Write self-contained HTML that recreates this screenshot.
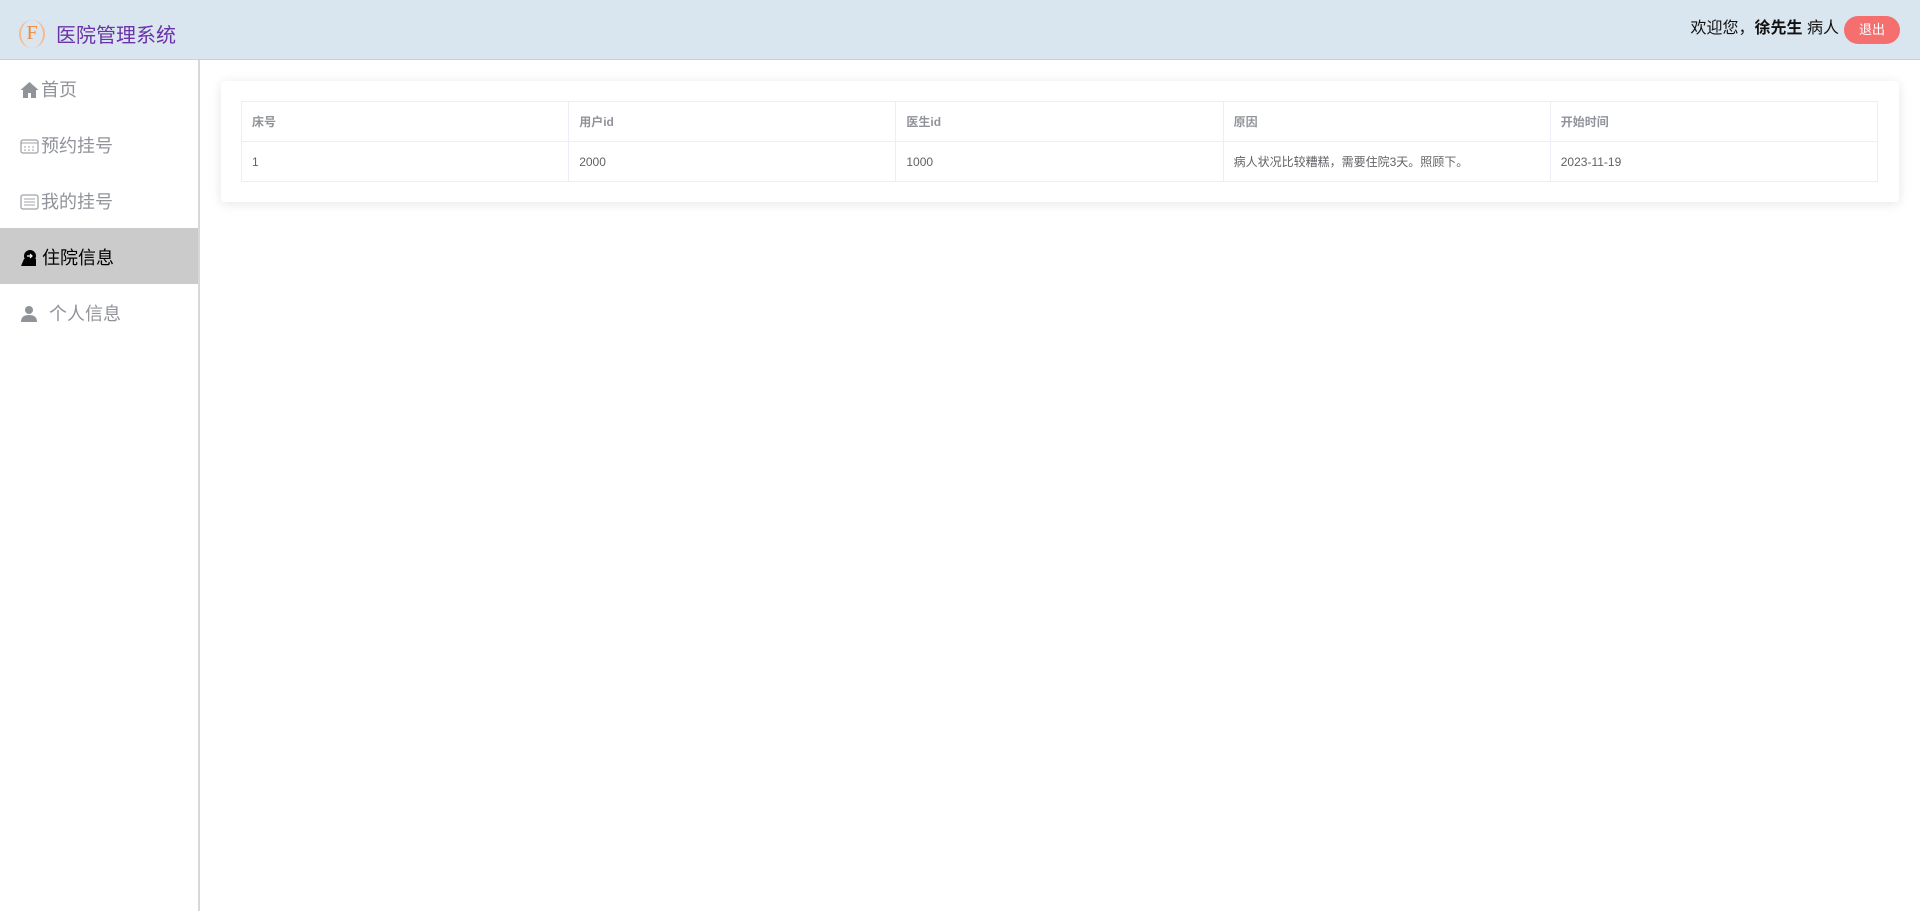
<!DOCTYPE html>
<html><head><meta charset="utf-8"><style>
*{margin:0;padding:0;box-sizing:border-box}
body{width:1920px;height:911px;overflow:hidden;background:#fff;font-family:"Liberation Sans","Noto Sans CJK SC",sans-serif;position:relative}
.hd{position:absolute;left:0;top:0;width:1920px;height:60px;background:#d9e5ef;border-bottom:1px solid #c8d0d8}
.logo{position:absolute;left:19px;top:20px;width:26px;height:28px;border-radius:50%;border-left:2px solid #f6b98a;border-right:2px solid #f6b98a;color:#f08a3c;font-family:"Liberation Serif",serif;font-size:20px;text-align:center;line-height:27px}
.title{position:absolute;left:56px;top:23px;font-size:20px;color:#6a33a8;line-height:26px}
.user{position:absolute;right:81px;top:17px;font-size:16px;color:#111;line-height:24px}
.btn{position:absolute;left:1844px;top:16px;width:56px;height:28px;border-radius:14px;background:#f56f6f;color:#fff;font-size:13px;text-align:center;line-height:28px}
.side{position:absolute;left:0;top:60px;width:200px;height:851px;border-right:2px solid #d8d8d8}
.it{height:56px;line-height:56px;padding-left:20px;padding-top:3px;font-size:18px;color:#909399;display:flex;align-items:center}
.it.act{background:#cbcbcb;color:#000}
.it svg{margin-right:2px}
.card{position:absolute;left:221px;top:81px;width:1678px;height:121px;background:#fff;border-radius:4px;box-shadow:0 2px 12px rgba(0,0,0,.1)}
table{position:absolute;left:20px;top:20px;width:1637px;border-collapse:collapse;font-size:12px}
td{border:1px solid #ebeef5;height:40px;padding-left:10px;width:327px}
th{border:1px solid #ebeef5;height:40px;padding-left:10px;text-align:left;color:#909399;font-weight:bold}
td{color:#606266}
</style></head><body>
<div class="hd">
<div class="logo">F</div>
<div class="title">医院管理系统</div>
<div class="user">欢迎您，<b>徐先生</b> 病人</div>
<div class="btn">退出</div>
</div>
<div class="side">
<div class="it"><svg width="19" height="18" viewBox="0 0 19 18"><path d="M9.5 1L0.5 9h2.5v8h5v-5h3v5h5V9h2.5z" fill="#909399"/></svg>首页</div>
<div class="it"><svg width="19" height="18" viewBox="0 0 19 18"><rect x="1" y="3" width="17" height="13" rx="2" fill="none" stroke="#a0a3a8" stroke-width="1.3"/><path d="M4 10h2M8 10h2M12 10h2M4 13h2M8 13h2M12 13h2M1 6h17" stroke="#a0a3a8"/></svg>预约挂号</div>
<div class="it"><svg width="19" height="18" viewBox="0 0 19 18"><rect x="1" y="2" width="17" height="14" rx="2" fill="none" stroke="#a0a3a8" stroke-width="1.3"/><path d="M4 6h11M4 9h11M4 12h11" stroke="#a0a3a8"/></svg>我的挂号</div>
<div class="it act"><svg width="20" height="18" viewBox="0 0 20 18"><circle cx="10" cy="7" r="6" fill="#000"/><path d="M1 17l3-7h12v7z" fill="#000"/><path d="M7 7h5M10 5l2 2-2 2" stroke="#fff" stroke-width="1.2" fill="none"/></svg>住院信息</div>
<div class="it"><svg width="22" height="18" viewBox="0 0 22 18"><circle cx="9" cy="5" r="4" fill="#909399"/><path d="M1 17c0-5 3-7 8-7s8 2 8 7z" fill="#909399"/></svg>&nbsp;个人信息</div>
</div>
<div class="card">
<table>
<tr><th>床号</th><th>用户id</th><th>医生id</th><th>原因</th><th>开始时间</th></tr>
<tr><td>1</td><td>2000</td><td>1000</td><td>病人状况比较糟糕，需要住院3天。照顾下。</td><td>2023-11-19</td></tr>
</table>
</div>
</body></html>
